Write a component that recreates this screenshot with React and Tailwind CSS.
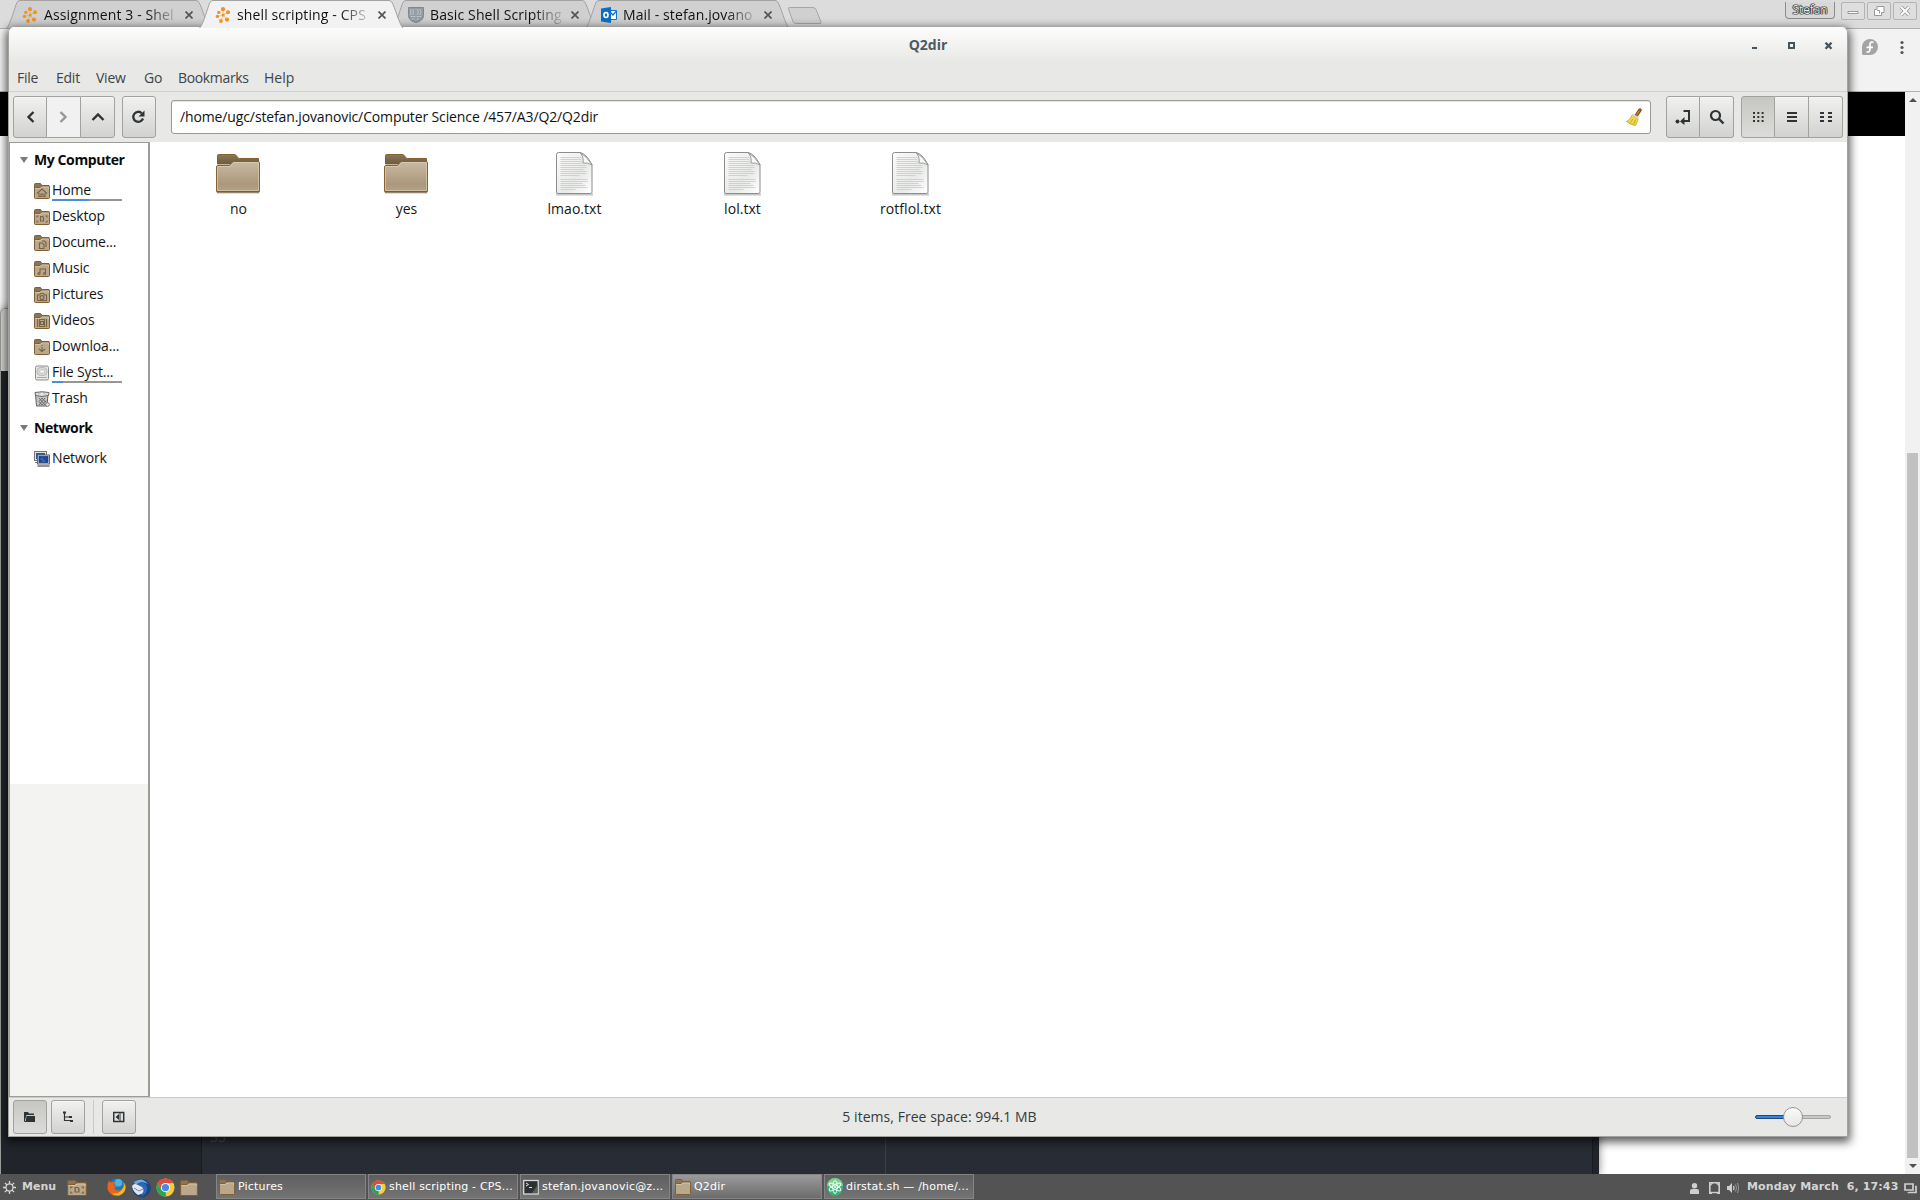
import React from "react";

const Hub = () => (
  <svg className="h-4 w-4 shrink-0" viewBox="0 0 16 16">
    <g fill="#f29222">
      <circle cx="8" cy="2.2" r="2.1" /><circle cx="13" cy="5.2" r="2" /><circle cx="3.8" cy="5.4" r="1.7" />
      <circle cx="2.4" cy="9.4" r="1.7" /><circle cx="6" cy="14" r="1.9" /><circle cx="12" cy="12.6" r="2.1" /><circle cx="8.2" cy="8" r="1.5" />
    </g>
    <path d="M8 2v6l5-3M8 8l4 5M8 8l-6 1.500M8 8l-2 6" stroke="#f29222" strokeWidth=".5" fill="none" />
  </svg>
);
const Shield = () => (
  <svg className="h-4 w-4 shrink-0" viewBox="0 0 16 16">
    <path d="M.5.5h15v8c0 4-3.500 6-7.500 7C4 14.500.5 12.500.5 8.500z" fill="#929ba3" stroke="#7e8992" />
    <path d="M2 3h5M9 3h5M2 5h4M9.500 5H14M2 7h5M9 7h4M3 9.500h4M9 9.500h4M4 12h3M9 12h2.500" stroke="#cfd4d8" strokeDasharray="1.500 1" />
    <path d="M8 1v14" stroke="#9da6ad" />
  </svg>
);
const Outlook = () => (
  <svg className="h-4 w-4 shrink-0" viewBox="0 0 16 16">
    <path d="M9 3.500h6.500v9H9z" fill="#fff" stroke="#0f74c8" />
    <path d="M9 5l3 3 3.500-4" fill="none" stroke="#0f74c8" strokeWidth="1.300" />
    <path d="M0 1.600L10 0v16L0 14.400z" fill="#0a6fc4" />
    <ellipse cx="5" cy="8" rx="2" ry="2.500" fill="none" stroke="#fff" strokeWidth="1.600" />
  </svg>
);

function Tab({ icon, label, active }) {
  return (
    <div className={"relative -mr-3 h-[27px] w-[205px] shrink-0 " + (active ? "z-10" : "")}>
      <svg className="absolute inset-0" width="205" height="28" viewBox="0 0 205 28">
        <path d="M.5 28C4 26 9 6 11 2.500Q12 .5 14 .5H190Q192 .5 193 2.500C196 7 200 24 204 28" fill={active ? "#f2f2f2" : "#d0d0d0"} stroke="#a2a2a2" />
      </svg>
      <div className="relative flex h-[29px] items-center pl-[16px]">
        {icon}
        <span className="ml-[6px] w-[136px] whitespace-nowrap bg-[linear-gradient(90deg,#111_76%,#1110_100%)] bg-clip-text text-[14px] leading-5 tracking-[0.120px] text-transparent">{label}</span>
        <svg className="ml-[5px] h-2 w-2" viewBox="0 0 8 8"><path d="M.5.5l7 7M7.500.5l-7 7" stroke="#555" strokeWidth="1.700" /></svg>
      </div>
    </div>
  );
}

const WinButton = ({ children }) => (
  <div className="grid h-[18px] w-6 place-items-center rounded-[2px] border border-[#b4b4b4] bg-[#dedede]">
    <svg width="12" height="12" viewBox="0 0 12 12" fill="none">{children}</svg>
  </div>
);

function Browser() {
  return (
    <div className="absolute inset-0 flex flex-col bg-white">
      <div className="flex h-7 shrink-0 bg-[#dcdcdc]">
        <div className="flex pl-[6px]">
          <Tab icon={<Hub />} label="Assignment 3 - Shel" />
          <Tab icon={<Hub />} label="shell scripting - CPS" active />
          <Tab icon={<Shield />} label="Basic Shell Scripting" />
          <Tab icon={<Outlook />} label="Mail - stefan.jovano" />
          <svg className="ml-[8px] mt-[6px]" width="38" height="19" viewBox="0 0 38 19">
            <path d="M3.500 1.500H27Q29 1.500 30 3.500L35 16Q35.500 17.500 34 17.500H10Q8 17.500 7 15.500L2.500 3Q2 1.500 3.500 1.500Z" fill="#d0d0d0" stroke="#a6a6a6" />
          </svg>
        </div>
        <div className="ml-auto flex gap-[2px] pr-[3px] pt-[2px]">
          <div className="mr-1 grid h-[17px] w-[50px] place-items-center rounded-b-[4px] border border-t-0 border-[#8c8c8c] bg-[#d8d8d8] text-[12px] leading-[14px] tracking-[-0.1px] text-[#e8e8e8] [text-shadow:0_0_1px_#111,0_0_1px_#111,0_0_1px_#111,0_0_1px_#111,0_0_1px_#111]">Stefan</div>
          <WinButton><path d="M1 6.500h10v2H1z" fill="#fff" stroke="#999" /></WinButton>
          <WinButton><path d="M4 1.500h7v6H8.500v3H1.500v-6H4z M4 5.500h2.500v3" fill="#fff" stroke="#999" /></WinButton>
          <WinButton><path d="M2 2l8 8M10 2l-8 8" stroke="#999" strokeWidth="3.500" /><path d="M2 2l8 8M10 2l-8 8" stroke="#fff" strokeWidth="1.800" /></WinButton>
        </div>
      </div>
      <div className="flex h-16 shrink-0 justify-end border-y border-[#b0b0b0] bg-[#f2f2f2] pt-[10px]">
        <svg className="mr-[20px]" width="16" height="16" viewBox="0 0 16 16">
          <path d="M8 0a8 8 0 110 16H1.500A1.500 1.500 0 010 14.500V8a8 8 0 018-8z" fill="#a4a4a4" />
          <path d="M11.500 3.500C9.500 2.300 8 3.500 8 5.500v4.700c0 2.300-1.500 3.300-3.500 2.500M4.500 8.300h6.500" fill="none" stroke="#fff" strokeWidth="1.700" />
        </svg>
        <svg className="mr-[14px]" width="8" height="16" viewBox="0 0 8 16" fill="#555"><circle cx="4" cy="3.500" r="1.600" /><circle cx="4" cy="8.500" r="1.600" /><circle cx="4" cy="13.500" r="1.600" /></svg>
      </div>
      <div className="flex grow">
        <div className="grow"><div className="h-11 bg-black" /></div>
        <div className="flex w-[15px] flex-col items-center bg-[#f1f1f1] pb-[32px]">
          <svg className="mt-[6px]" width="8" height="4" viewBox="0 0 8 4"><path d="M0 4l4-4 4 4z" fill="#505050" /></svg>
          <div className="mt-[351px] h-[705px] w-[11px] bg-[#c1c1c1]" />
          <svg className="mt-[6px]" width="8" height="4" viewBox="0 0 8 4"><path d="M0 0l4 4 4-4z" fill="#505050" /></svg>
        </div>
      </div>
    </div>
  );
}

function Editor() {
  return (
    <div className="absolute left-0 top-[308px] flex h-[866px] w-[1599px] flex-col overflow-hidden rounded-t-md border-l border-[#9a9a96] bg-[#d8d8d6] shadow-[0_0_8px_rgba(0,0,0,0.5)]">
      <div className="h-[63px] border-t border-[#999]" />
      <div className="flex grow bg-[#282c34]">
        <div className="w-[201px] border-r border-[#181a1f] bg-[#21252b]" />
        <div className="flex w-[684px] items-end border-r border-[#3a3f4b] pb-[27px] pl-2 text-[14px] leading-5 text-[#4b5263]">35</div>
        <div className="grow" />
        <div className="w-[7px] border-l border-[#181a1f] bg-[#21252b]" />
      </div>
    </div>
  );
}

const btn = "grid place-items-center border-[#a1a19d] bg-linear-to-b from-[#f1f1f0] to-[#d2d2d0] text-[#2e3436] shadow-[inset_0_1px_0_#fff8]";
const on = "grid place-items-center border-[#a1a19d] bg-linear-to-b from-[#c6c6c2] to-[#dcdcda] text-[#2e3436]";

const I = ({ children, w = 16 }) => (
  <svg width={w} height="16" viewBox={`0 0 ${w} 16`} fill="none" stroke="currentColor" strokeWidth="2">{children}</svg>
);

function TitleAndMenu() {
  return (
    <>
      <div className="flex h-[35px] shrink-0 bg-linear-to-b from-[#fdfdfd] to-[#e8e8e6]">
        <div className="w-[96px]" />
        <div className="grow pt-[8px] text-center text-[14px] font-bold leading-5 text-[#4a5b63]">Q2dir</div>
        <svg className="mr-[14px] mt-[15px]" width="82" height="8" viewBox="0 0 82 8" fill="none" stroke="#43565f">
          <path d="M1 6h5" strokeWidth="2" /><path d="M38 1h5v5h-5z" strokeWidth="2" /><path d="M74.500 .7l6 6M80.500 .7l-6 6" strokeWidth="2.300" />
        </svg>
      </div>
      <div className="flex h-[30px] shrink-0 items-center border-b border-[#d0d0ce] pl-[8px] pt-[2px] text-[14px] leading-5 tracking-[-0.25px] text-[#3d4446]">
        <span className="w-[39px]">File</span><span className="w-[40px]">Edit</span><span className="w-[48px]">View</span><span className="w-[34px]">Go</span><span className="w-[86px] tracking-[-0.350px]">Bookmarks</span><span className="tracking-[0.050px]">Help</span>
      </div>
    </>
  );
}

function Toolbar() {
  return (
    <div className="flex h-[50px] shrink-0 items-center px-1">
      <div className="flex h-[42px] w-[102px]">
        <div className={btn + " w-[34px] rounded-l-[3px] border"}><I><path d="M11.500 3L6.500 8l5 5" strokeWidth="2.400" /></I></div>
        <div className="grid w-[33px] place-items-center border-y border-[#a1a19d] bg-[#f1f1f1] text-[#949795]"><I><path d="M4.500 3l5 5-5 5" strokeWidth="2.400" /></I></div>
        <div className={btn + " w-[35px] rounded-r-[3px] border"}><I><path d="M2.500 11L8 5.500l5.500 5.500" strokeWidth="2.400" /></I></div>
      </div>
      <div className={btn + " ml-[7px] h-[42px] w-[34px] rounded-[3px] border"}>
        <I><path d="M10.800 4.200A5 5 0 1012 9.500" strokeWidth="2.300" /><path d="M13.500 1.500v6h-6z" fill="currentColor" stroke="none" /></I>
      </div>
      <div className="ml-[15px] flex h-[34px] grow items-center rounded-[3px] border border-[#9b9b98] bg-white pl-2 pr-[8px] shadow-[inset_0_1px_1px_#e4e4e4]">
        <span className="text-[14px] leading-5 tracking-[-0.125px] text-[#111]">/home/ugc/stefan.jovanovic/Computer Science /457/A3/Q2/Q2dir</span>
        <svg className="ml-auto" width="16" height="18" viewBox="0 0 16 18">
          <path d="M14 2l-4 6" stroke="#8a541c" strokeWidth="3.500" strokeLinecap="round" /><path d="M13.500 2.500l-3 4.500" stroke="#c58a3c" strokeWidth="1.200" />
          <path d="M6 7l6 3.500C12 13 10 16 9.500 17.500 6 17 3 15.500.5 13.500 3 12 5 10 6 7z" fill="#ead94b" stroke="#c3a51b" strokeWidth=".8" />
          <path d="M7 11l-3 4M9.500 11.500L7.500 16.500" stroke="#b99a17" strokeWidth=".7" /><path d="M6.500 6.500l6 3.500" stroke="#d8d8d8" strokeWidth="2" />
        </svg>
      </div>
      <div className="ml-[15px] flex h-[42px]">
        <div className={btn + " w-[34px] rounded-l-[3px] border"}><I><circle cx="2.500" cy="12.500" r="2" fill="currentColor" stroke="none" /><path d="M8.500 2H14v10H7.500" /><path d="M9.500 8v8L5 12.500z" fill="currentColor" stroke="none" /></I></div>
        <div className={btn + " w-[34px] rounded-r-[3px] border border-l-0"}><I><circle cx="6.500" cy="6.500" r="4.500" strokeWidth="2.200" /><path d="M10 10l4.500 4.500" strokeWidth="2.400" /></I></div>
      </div>
      <div className="ml-[7px] flex h-[42px]">
        <div className={on + " w-[34px] rounded-l-[3px] border"}><I><path d="M3 4h11M3 8h11M3 12h11" strokeDasharray="2 2.300" /></I></div>
        <div className={btn + " w-[34px] border border-l-0"}><I><path d="M3 4h10M3 8h10M3 12h10" /></I></div>
        <div className={btn + " w-[34px] rounded-r-[3px] border border-l-0"}><I><path d="M2 4h4M2 8h4M2 12h4M10 4h4M10 8h4M10 12h4" /></I></div>
      </div>
    </div>
  );
}

const glyphs = {
  home: <path d="M3 10.500l5-4.500 5 4.500M5 10v3.500h2V11h2v2.500h2V10" />,
  desktop: <path d="M3 8.500V7h1.500M11.500 7H13v1.500M3 11.500V13h1.500M11.500 13H13v-1.500M6.500 7.500h2l1 1V12h-3z" />,
  documents: <path d="M5.500 8h3L10 9.500v4H5.500zM8 6h2.500L12 7.500V12" />,
  music: <path d="M6 12.500V8h5.500v4.500M6 12.500a1 1 0 11-1-1h1M11.500 12.500a1 1 0 11-1-1h1" />,
  pictures: <path d="M3.500 8h2l1-1.500h3l1 1.500h2v5.500h-9zM10 10.600a2 2 0 11-4 0 2 2 0 014 0z" />,
  videos: <path d="M3.500 6v8M5.500 6v8M10.500 6v8M12.500 6v8M5.500 6.500h5M5.500 13.500h5M6.500 8.500h3v3h-3z" />,
  downloads: <path d="M8 6v1M8 8v5M5 10l3 2.500 3-2.500" />,
};
function MiniFolder({ kind, className = "h-4 w-4" }) {
  return (
    <svg className={"shrink-0 " + className} viewBox="0 0 16 16" preserveAspectRatio="none">
      <path d="M.5 14V1.500Q.5.5 1.500.5h5l1.500 2h7v11z" fill="#8a7557" stroke="#7c6040" />
      <path d="M.5 5.500Q.5 4.500 1.500 4.500h4.500l1.500-1.500h7q1 0 1 1v10.500q0 1-1 1h-13q-1 0-1-1z" fill="#bba88b" stroke="#805f35" />
      <path d="M1.500 6V5.500h5L8 4h6.500v2" fill="none" stroke="#d5c8ae" strokeWidth=".8" />
      <g fill="none" stroke="#776345" strokeWidth="1.100">{glyphs[kind]}</g>
    </svg>
  );
}
const Disk = () => (
  <svg className="h-4 w-4 shrink-0" viewBox="0 0 16 16">
    <rect x="1.500" y="1" width="13" height="14" rx="1.500" fill="#e9e9e7" stroke="#8d8d8b" />
    <rect x="3" y="2.500" width="10" height="8" rx="3.500" fill="#d9d9d7" stroke="#b8b8b6" /><ellipse cx="8" cy="6.500" rx="2.500" ry="2" fill="#f5f5f5" stroke="#c4c4c2" /><path d="M3 12.500h10" stroke="#aaa" />
  </svg>
);
const TrashIcon = () => (
  <svg className="h-4 w-4 shrink-0" viewBox="0 0 16 16">
    <path d="M1.500 3l1 12h10.500l1-12z" fill="#c4c6c4" stroke="#5f625f" />
    <path d="M5 7l6 7M8 7l4 4.500M5 10.500l3 3.500M11 7l-6 7M12 9.500l-4 4.500M8 7l-3 3.500" stroke="#555955" strokeWidth=".8" />
    <path d="M1 1.500q7-1.500 14 0l-.5 3q-7 2-13 0z" fill="#dadcda" stroke="#666966" /><path d="M4 3.200l4-1.700 3 1.700" fill="#fff" stroke="#999" strokeWidth=".6" />
    <circle cx="13.500" cy="13.500" r="1.900" fill="#e6e6e6" stroke="#666" strokeWidth=".8" />
  </svg>
);
const NetIcon = () => (
  <svg className="h-4 w-4 shrink-0" viewBox="0 0 16 16">
    <rect x=".5" y=".5" width="12" height="9" fill="#e1e1dd" stroke="#74766f" /><rect x="2" y="2" width="9" height="6" fill="#2859a5" /><path d="M1 11.500h5" stroke="#74766f" />
    <rect x="3.500" y="4" width="12" height="9" fill="#e1e1dd" stroke="#62645e" /><rect x="5" y="5.500" width="9" height="6" fill="#204a96" stroke="#133275" strokeWidth=".7" /><path d="M6.500 8h3M8 10h3" stroke="#4d7fca" />
    <path d="M3.500 15h12" stroke="#777" strokeWidth="1.600" />
  </svg>
);

const places = [
  ["Home", <MiniFolder kind="home" />, "w-[37px]"], ["Desktop", <MiniFolder kind="desktop" />], ["Docume...", <MiniFolder kind="documents" />],
  ["Music", <MiniFolder kind="music" />], ["Pictures", <MiniFolder kind="pictures" />], ["Videos", <MiniFolder kind="videos" />],
  ["Downloa...", <MiniFolder kind="downloads" />], ["File Syst...", <Disk />, "w-[11px]"], ["Trash", <TrashIcon />],
];
const Place = ({ label, icon, usage }) => (
  <div className="flex h-[26px] items-center pl-[24px] text-[14px] leading-5 tracking-[-0.150px] text-[#151515]">
    <span className="pt-[1px]">{icon}</span>
    <span className="relative ml-[2px] w-[70px] whitespace-nowrap">
      {label}
      {usage && <span className="absolute bottom-[-1px] left-0 flex h-[2px] w-[70px] bg-[#979792]"><span className={"bg-[#4a90d9] " + usage} /></span>}
    </span>
  </div>
);
const Heading = ({ children }) => (
  <div className="flex h-[34px] items-center pl-[10px] text-[14px] font-bold leading-5 tracking-[-0.4px] text-[#0c0c0c]">
    <svg className="mr-[6px]" width="8" height="6" viewBox="0 0 8 6"><path d="M0 0h8L4 6z" fill="#777c7b" /></svg>{children}
  </div>
);

function Sidebar() {
  return (
    <div className="flex w-[141px] shrink-0 flex-col border border-r-2 border-[#9c9c98] bg-[#f3f3f1]">
      <div className="h-[641px] shrink-0 bg-white">
        <Heading>My Computer</Heading>
        {places.map(([label, icon, usage]) => <Place key={label} label={label} icon={icon} usage={usage} />)}
        <Heading>Network</Heading>
        <Place label="Network" icon={<NetIcon />} />
      </div>
    </div>
  );
}

const BigFolder = () => (
  <svg width="48" height="48" viewBox="0 0 48 48">
    <defs>
      <linearGradient id="fold" x2="0" y2="1"><stop stopColor="#c8baa3" /><stop offset=".75" stopColor="#ab987c" /><stop offset="1" stopColor="#b5a288" /></linearGradient>
      <linearGradient id="back" x2="0" y2="1"><stop stopColor="#8b7858" /><stop offset="1" stopColor="#6d5b3e" /></linearGradient>
    </defs>
    <path d="M3 42.800h42" stroke="#000" strokeOpacity=".28" strokeWidth="1.500" />
    <path d="M3.500 14V5.500q0-1 1-1H20.500q1 0 1.500.7l2 2.600q.5.700 1.500.700H44.500V14z" fill="url(#back)" stroke="#87622e" />
    <path d="M2.500 17q0-1.500 1.500-1.500H15.500l2.500-3q.8-1 2-1H44q1.500 0 1.500 1.500v28q0 .8-1 .8h-41q-1 0-1-.8z" fill="url(#fold)" stroke="#87622e" />
    <path d="M3.500 17q0-.5.500-.5h12l2.500-3q.7-1 1.500-1h24.500V40.500h-41z" fill="none" stroke="#ddd0b8" strokeOpacity=".65" />
    <path d="M2.500 41.800h43" stroke="#6d4f28" />
  </svg>
);
const TextFile = () => (
  <svg width="48" height="48" viewBox="0 0 48 48">
    <defs><linearGradient id="paper" x2="1" y2="1"><stop stopColor="#fbfbfa" /><stop offset=".6" stopColor="#e8eae8" /><stop offset="1" stopColor="#fff" /></linearGradient></defs>
    <path d="M6 44.500h37" stroke="#000" strokeOpacity=".22" strokeWidth="2" />
    <path d="M6.500 4.500q0-2 2-2H30q6 1 12 12V42q0 1.500-1.500 1.500H8q-1.500 0-1.500-1.500z" fill="url(#paper)" stroke="#8c8e8b" />
    <path d="M10.500 7.500h21M10.500 9.500h21M10.500 11.500h22M10.500 13.500h22M10.500 15.500h26M10.500 17.500h26M10.500 19.500h23M10.500 21.500h26M10.500 23.500h26M10.500 25.500h19M10.500 29.500h27M10.500 31.500h27M10.500 33.500h22M10.500 35.500h25M10.500 37.500h27M10.500 39.500h15" stroke="#d0d2cf" />
    <path d="M30 2.700q4 4 3 10.300 5-.5 9 2Q37 6 30 2.700z" fill="#f6f6f5" stroke="#929491" strokeWidth=".9" />
  </svg>
);
const files = [["no", "dir"], ["yes", "dir"], ["lmao.txt", "txt"], ["lol.txt", "txt"], ["rotflol.txt", "txt"]];

function StatusBar() {
  return (
    <div className="flex h-[39px] shrink-0 items-center border-t border-[#cbcbc9] px-1">
      <div className={on + " h-[34px] w-[34px] rounded-[3px] border"}><I w={12}><path d="M0 3h4l1 1.500h5V6H2.500L1 11z" fill="currentColor" stroke="none" /><path d="M2.500 7H11l0 6H1.500z" fill="currentColor" stroke="none" /><path d="M.5 3v9.500h2" strokeWidth="1" /></I></div>
      <div className={btn + " ml-1 h-[34px] w-[34px] rounded-[3px] border"}><I w={12}><path d="M2.500 3.500v8H9M2.500 8H8" strokeWidth="1.200" /><path d="M1 2.500h3v2H1zM7 7h3v2H7zM8 11h3v2H8z" fill="currentColor" stroke="none" /></I></div>
      <div className="ml-[8px] h-[34px] w-px bg-[#c9c9c7]" />
      <div className={btn + " ml-[8px] h-[34px] w-[34px] rounded-[3px] border"}><I w={12}><rect x=".7" y="3.500" width="10" height="9" strokeWidth="1.500" /><path d="M6 5v6L2.500 8z" fill="currentColor" stroke="none" /><path d="M7 4v8" strokeWidth="1" /></I></div>
      <div className="grow pr-[12px] text-center text-[14px] leading-5 tracking-[0.040px] text-[#353b3d]">5 items, Free space: 994.1 MB</div>
      <div className="relative mr-[12px] flex h-1 w-[76px]">
        <div className="w-[38px] rounded-l-sm border border-[#1c4a80] bg-[#3584d8]" /><div className="grow rounded-r-sm border border-[#a4a4a1] bg-[#c8c8c6]" />
        <div className="absolute left-[28px] top-[-8px] h-5 w-5 rounded-full border border-[#949491] bg-linear-to-b from-[#fafafa] to-[#e6e6e5]" />
      </div>
    </div>
  );
}

function FileManager() {
  return (
    <div className="absolute left-[8px] top-[27px] flex h-[1110px] w-[1840px] flex-col overflow-hidden rounded-t-[6px] border-x border-b border-[#a2a29e] bg-[#e8e8e6]">
      <TitleAndMenu />
      <Toolbar />
      <div className="flex min-h-0 grow">
        <div className="flex h-[955px]"><Sidebar /></div>
        <div className="flex grow bg-white pl-[4px] pt-[8px]">
          {files.map(([name, kind]) => (
            <div key={name} className="flex w-[168px] flex-col items-center">
              {kind === "dir" ? <BigFolder /> : <TextFile />}
              <span className="mt-px pl-[1px] text-[14px] leading-5 tracking-[0.050px] text-[#151515]">{name}</span>
            </div>
          ))}
        </div>
      </div>
      <StatusBar />
    </div>
  );
}

const ChromeIcon = ({ className }) => (
  <svg className={className} viewBox="0 0 20 20">
    <circle cx="10" cy="10" r="9.500" fill="#f7ce3a" />
    <path d="M10 .5a9.500 9.500 0 018.200 4.700H10L5.800 12.300 1.700 5.300A9.500 9.500 0 0110 .5z" fill="#df4b3d" />
    <path d="M1.700 5.300l4.200 7.200L10 14.500l.6 5A9.500 9.500 0 011.700 5.300z" fill="#2ba35a" />
    <circle cx="10" cy="10" r="4.800" fill="#fff" /><circle cx="10" cy="10" r="3.800" fill="#4688ec" />
  </svg>
);
const Firefox = () => (
  <svg className="h-[19px] w-[19px]" viewBox="0 0 20 20">
    <circle cx="10.500" cy="9.500" r="9" fill="#1c7ab8" /><circle cx="12" cy="5" r="4" fill="#4cb5df" />
    <path d="M2 3l2.500 2Q7 3.500 9 5q-1.500 1-2 2.500l3 1q-1 2-2.500 2 2.500 4 7 2Q18 10 17 4q3 3 2.500 7.500A9.700 9.700 0 01.5 11Q.3 6 2 3z" fill="#e8641f" />
    <path d="M18.500 5q3 8-3.500 12-5 3-10-1 6 1.500 10-2.500 4-4 3.500-8.500z" fill="#f8ba28" />
  </svg>
);
const Thunderbird = () => (
  <svg className="h-5 w-5" viewBox="0 0 20 20">
    <circle cx="10.500" cy="10" r="9.300" fill="#1d4488" />
    <path d="M3 4q8-6 14 2-5-3-9-1l-4 2z" fill="#6fa8e0" />
    <path d="M1 8q2-3 5-1.500l8 2.500-1 6-6 2q-5-3-6-9z" fill="#e4e8ed" />
    <path d="M3 10l5 3 6-3" fill="none" stroke="#75849a" />
    <path d="M10 4q9 2 5 11-2 3-6 3 6-5 2-9l-4-2z" fill="#2f67b3" />
  </svg>
);
const Terminal = () => (
  <svg className="h-4 w-4 shrink-0" viewBox="0 0 16 16"><rect x=".7" y="1.500" width="14.500" height="13.500" fill="#2c3133" stroke="#d8dad6" strokeWidth="1.300" /><path d="M3 4l2.500 1.500L3 7M6 8.500h3" fill="none" stroke="#e5e5e5" /><path d="M9 14l5.500-8v8z" fill="#59605f" /></svg>
);
const Atom = () => (
  <svg className="h-[18px] w-4 shrink-0" viewBox="0 0 16 18"><ellipse cx="8" cy="9" rx="8" ry="9" fill="#36b37c" /><path d="M0 8a8 8 0 0116 0z" fill="#7ccf94" />
    <g fill="none" stroke="#f4fff8" strokeWidth="1"><ellipse cx="8" cy="9" rx="2.200" ry="6.500" /><ellipse cx="8" cy="9" rx="2.200" ry="6.500" transform="rotate(60 8 9)" /><ellipse cx="8" cy="9" rx="2.200" ry="6.500" transform="rotate(120 8 9)" /></g><circle cx="8" cy="9" r="1" fill="#fff" /></svg>
);
const tasks = [
  ["Pictures", <MiniFolder />], ["shell scripting - CPS...", <ChromeIcon className="h-[15px] w-[15px] shrink-0" />],
  ["stefan.jovanovic@z...", <Terminal />], ["Q2dir", <MiniFolder />, true], ["dirstat.sh — /home/...", <Atom />],
];

function Taskbar() {
  return (
    <div className="absolute inset-x-0 bottom-0 flex h-[26px] bg-[#535353] font-['DejaVu_Sans'] text-[11px] text-white">
      <div className="flex w-[216px] items-center pl-[3px] pt-px">
        <svg className="h-[13px] w-[13px]" viewBox="0 0 14 14" fill="none" stroke="#d9d9d9"><circle cx="7" cy="7" r="3.800" strokeWidth="1.400" /><path d="M7 0v3M7 11v3M0 7h3M11 7h3M2 2l2.200 2.200M9.800 9.800L12 12M12 2L9.800 4.200M4.200 9.800L2 12" strokeWidth="1.400" /></svg>
        <span className="-mt-px ml-[6px] w-[45px] font-bold text-[#d3d3d3]">Menu</span>
        <MiniFolder kind="desktop" className="h-[16px] w-[20px]" />
        <div className="ml-[20px] flex items-center gap-[5px]"><Firefox /><Thunderbird /><ChromeIcon className="h-[19px] w-[19px]" /><MiniFolder className="h-4 w-[18px]" /></div>
      </div>
      <div className="flex gap-[2px] pb-px">
        {tasks.map(([label, icon, active]) => (
          <div key={label} className={"flex w-[150px] items-center gap-[3px] whitespace-nowrap border border-[#858585] pl-[2px] pt-px tracking-[0.180px] " + (active ? "bg-linear-to-b from-[#9b9b9b] to-[#6c6c6c]" : "bg-linear-to-b from-[#5e5e5e] to-[#747474]")}>
            {icon}<span>{label}</span>
          </div>
        ))}
      </div>
      <div className="ml-auto flex items-center pr-[3px]">
        <svg className="mr-[10px] mt-[3px]" width="9" height="12" viewBox="0 0 9 12" fill="#cfcfcf"><circle cx="4.500" cy="2.800" r="2.700" /><path d="M0 11V8q0-2 2-2h5q2 0 2 2v3z" /></svg>
        <svg className="mr-[7px] mt-[2px]" width="11" height="12" viewBox="0 0 11 12" fill="none" stroke="#cfcfcf"><path d="M3 11.200H.800V.8h9.400v10.400H8" strokeWidth="1.600" /><path d="M1 10.500h9" strokeWidth="1.400" /><path d="M1 3.500L3.500 1M10 3.500L7.500 1" strokeWidth="1.200" /></svg>
        <svg className="mr-[8px] mt-[2px]" width="12" height="12" viewBox="0 0 12 12" fill="none" stroke="#cfcfcf"><path d="M0 4h2l3-3v10L2 8H0z" fill="#cfcfcf" stroke="none" /><path d="M6.500 4q1 2 0 4" strokeWidth="1.300" /><path d="M8.500 2.500q2 3.500 0 7M10.500 1q2.500 5 0 10" stroke="#999" /></svg>
        <span className="w-[157px] whitespace-pre font-bold tracking-[0.120px] text-[#d5d5d5]">Monday March  6, 17:43</span>
        <svg className="mt-[2px]" width="13" height="12" viewBox="0 0 13 12" fill="none" stroke="#cfcfcf" strokeWidth="1.700"><path d="M1 2h8v6H1zM11 4.500h1v6H4.500V10" /></svg>
      </div>
    </div>
  );
}

export default function App() {
  return (
    <div className="relative h-[1200px] w-[1920px] overflow-hidden font-['Open_Sans','Noto_Sans',sans-serif]">
      <Browser />
      <Editor />
      <div className="absolute left-[8px] top-[27px] h-[1110px] w-[1840px] rounded-t-[6px] shadow-[0_3px_10px_2px_rgba(0,0,0,0.65)]" />
      <FileManager />
      <Taskbar />
    </div>
  );
}
